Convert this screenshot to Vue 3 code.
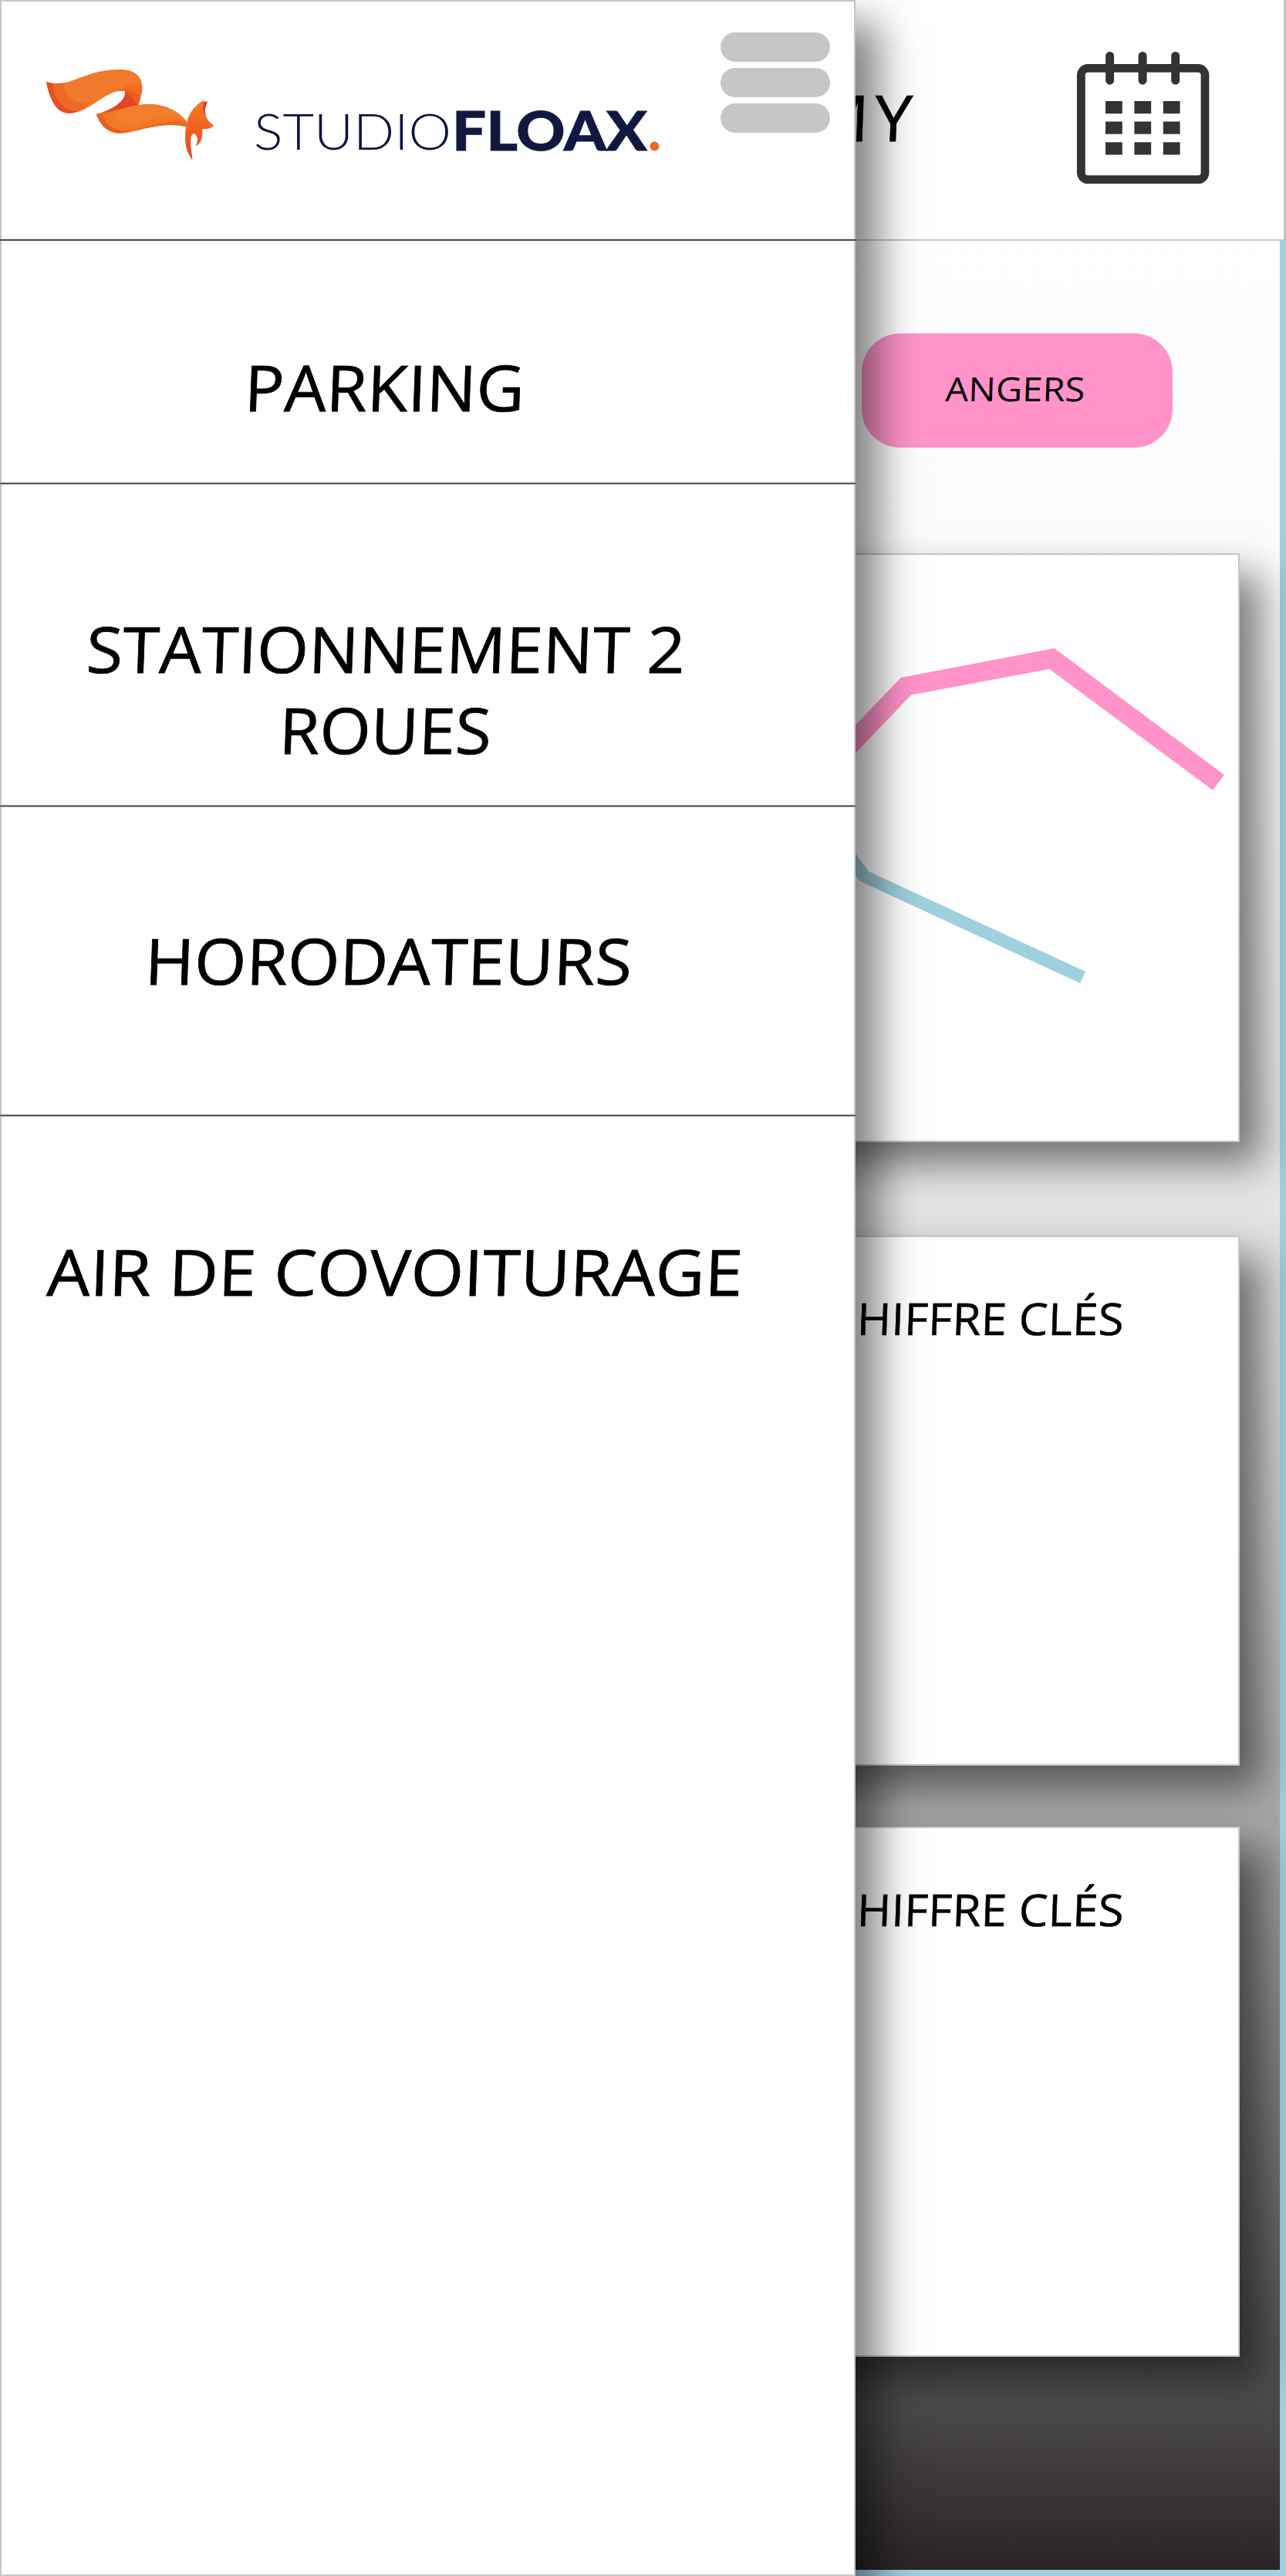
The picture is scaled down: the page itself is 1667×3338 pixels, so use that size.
<script setup>
const menu = [
  { id: 'parking', height: 316, lines: [{ text: 'PARKING', x: 316, y: 221, w: 363 }] },
  {
    id: 'deux-roues',
    height: 418,
    lines: [
      { text: 'STATIONNEMENT 2', x: 111, y: 244, w: 776 },
      { text: 'ROUES', x: 361, y: 349, w: 275 }
    ]
  },
  { id: 'horodateurs', height: 401, lines: [{ text: 'HORODATEURS', x: 187, y: 230, w: 631 }] },
  { id: 'covoiturage', height: 401, lines: [{ text: 'AIR DE COVOITURAGE', x: 60, y: 232, w: 902 }] }
]
const cards = ['c1', 'c2']
const cols = [1433, 1470.4, 1507.8].map((x) => x - 1396)
const rows = [131, 157.5, 184.3].map((y) => y - 67)
const rings = [42.6, 85.1, 127.7]
</script>

<template>
  <div class="page">
    <div class="screen">
      <header class="topbar">
        <svg class="title" width="160" height="100">
          <text transform="translate(11 83) skewX(-2)" font-size="82.6">M</text>
          <text transform="translate(93 83) skewX(-2)" font-size="82.6" textLength="48.5" lengthAdjust="spacingAndGlyphs">Y</text>
        </svg>
        <svg class="calendar" width="172" height="172" fill="#333331">
          <rect x="5.4" y="21.4" width="160.6" height="144.3" rx="9" fill="none" stroke="#333331" stroke-width="10.8" />
          <rect v-for="r in rings" :key="r" :x="r - 5.5" y="0" width="11" height="42.7" rx="5.5" />
          <template v-for="y in rows" :key="y">
            <rect v-for="x in cols" :key="x" :x="x" :y="y" width="21.8" height="16.2" />
          </template>
        </svg>
      </header>
      <main class="content">
        <div class="chip">
          <svg width="402" height="148">
            <text transform="translate(108 87.7) skewX(-2)" font-size="43" textLength="181" lengthAdjust="spacingAndGlyphs">ANGERS</text>
          </svg>
        </div>
        <section class="card chart">
          <svg width="607" height="759" viewBox="998 719 607 759">
            <path fill="#ff93ca" d="M1068 982L1168 878L1366.8 840.1L1586.9 1004L1572 1023.8L1360.4 867L1181 900.4L1068 1019Z" />
            <path fill="#9fd0dd" d="M1068 1049.3L1109 1106L1125.7 1129.1L1407.2 1259.1L1400 1274L1113.7 1141.2L1109 1134.6L1068 1077Z" />
          </svg>
        </section>
        <section v-for="c in cards" :key="c" class="card figures">
          <svg width="607" height="160">
            <text transform="translate(69 126.5) skewX(-2)" font-size="57.4" textLength="389" lengthAdjust="spacingAndGlyphs">C<tspan dx="5">HIFFRE CLÉS</tspan></text>
          </svg>
        </section>
      </main>
    </div>

    <aside class="drawer">
      <div class="brand">
        <svg class="fox" width="260" height="150" viewBox="0 0 780 450">
          <defs>
            <linearGradient id="foxBody" x1="0" y1="0" x2="0" y2="1">
              <stop offset="0" stop-color="#f47c28" />
              <stop offset=".45" stop-color="#f3641f" />
              <stop offset="1" stop-color="#e4422a" />
            </linearGradient>
            <linearGradient id="foldBack" x1="0" y1="1" x2="1" y2="0">
              <stop offset="0" stop-color="#ee5c22" />
              <stop offset=".4" stop-color="#e34326" />
            </linearGradient>
          </defs>
          <path fill="url(#foldBack)" d="M366 146C368 188 312 216 256 234L340 226L418 202L408 156Z" />
          <path fill="#f1792c" d="M60 108Q100 121 150 107C215 85 255 62 345 60C410 60 433 92 433 130C433 160 422 178 418 201C408 182 388 164 370 146Q355 139 330 146C265 168 215 230 150 230C100 230 75 180 60 108Z" />
          <path fill="#f36c22" d="M433 125C433 160 422 178 418 201C408 182 388 164 370 146Q355 139 330 146C375 120 400 108 433 125Z" />
          <path fill="#ef5b20" d="M370 146Q355 139 330 146C370 130 400 140 426 172L418 201C408 182 388 164 370 146Z" />
          <path fill="#ee6b27" d="M60 108Q95 120 127 113C133 165 170 195 232 192C205 214 180 230 150 230C100 230 75 180 60 108Z" />
          <path fill="#e94e24" d="M60 108L86 116C90 180 125 222 185 221Q168 230 150 230C100 230 75 180 60 108Z" />
          <path fill="#f27824" d="M254 233C330 225 395 195 460 194C535 196 580 228 608 264L606 283C560 272 510 275 450 288C410 298 380 308 345 308C295 305 270 275 254 233Z" />
          <path fill="#f37f2c" d="M322 224C380 206 420 196 460 196C525 198 570 222 598 256C540 225 490 250 430 268C370 282 330 262 322 224Z" />
          <path fill="#ef5c20" d="M254 233L278 230C290 280 330 305 395 297C370 305 355 308 345 308C295 305 270 275 254 233Z" />
          <path fill="#f2641f" d="M395 297C460 276 540 256 602 266L606 283C560 272 510 275 450 288Z" />
          <path fill="url(#foxBody)" d="M673 180C640 195 615 230 608 262C598 300 598 340 605 365C612 390 622 400 628 413C629 395 620 370 622 335C622 315 630 308 638 311C650 320 651 340 640 358C657 352 669 335 667 292C687 292 705 288 712 277C700 272 685 258 679 235C674 214 682 195 688 184Q678 190 673 180Z" />
          <path fill="#df3a2b" d="M688 184L672 190C667 210 669 226 680 238C674 214 682 198 688 184Z" />
        </svg>
        <svg class="wordmark" width="560" height="80">
          <text class="thin" x="29" y="66" font-size="65.5" textLength="256" lengthAdjust="spacingAndGlyphs">STUDIO</text>
          <text class="black" x="286" y="66.5" font-size="71" textLength="253" lengthAdjust="spacingAndGlyphs">FLOAX</text>
          <circle cx="548.4" cy="61.5" r="6" fill="#f26722" />
        </svg>
        <div class="burger"><i></i><i></i><i></i></div>
      </div>
      <nav>
        <a v-for="item in menu" :key="item.id" class="item" :style="{ height: item.height + 'px' }">
          <svg width="1109" :height="item.height - 3">
            <text
              v-for="l in item.lines"
              :key="l.text"
              :transform="`translate(${l.x} ${l.y}) skewX(-2)`"
              font-size="82.6"
              :textLength="l.w"
              lengthAdjust="spacingAndGlyphs"
            >{{ l.text }}</text>
          </svg>
        </a>
      </nav>
    </aside>
  </div>
</template>

<style>
body { margin: 0; }
</style>

<style scoped>
.page {
  position: relative;
  width: 1667px;
  height: 3338px;
  overflow: hidden;
  background: #9fd0dd;
  font-family: "Open Sans", "Noto Sans", sans-serif;
}
svg { display: block; flex: none; }
.screen {
  width: 1659px;
  height: 3329.5px;
  background: linear-gradient(#fff 0, #fefefe 400px, #fcfcfc 700px, #f3f3f3 1100px, #e5e5e5 1550px, #cccccc 1960px, #a9a8a8 2350px, #7b7878 2730px, #4c4949 3120px, #292425 3329px);
}
.topbar {
  box-sizing: border-box;
  display: flex;
  width: 1666px;
  height: 312px;
  padding-left: 1040px;
  background: #fff;
  border-right: 2px solid #c6c6c6;
  border-bottom: 2px solid #c6c6c6;
}
.title { margin-top: 100px; }
.title text, .item text { stroke: #000; stroke-width: .8px; }
.figures text { stroke: #000; stroke-width: .5px; }
.calendar { margin: 67px 0 0 196px; }
.content {
  display: flex;
  flex-direction: column;
  align-items: flex-end;
  padding: 120px 52px 0 0;
}
.chip {
  width: 402.5px;
  height: 148px;
  margin-right: 87.5px;
  border-radius: 50px;
  background: #ff93ca;
}
.card {
  box-sizing: border-box;
  display: flex;
  justify-content: flex-end;
  width: 1547px;
  background: #fff;
  border: 2px solid #c6c6c6;
  box-shadow: 28px 28px 48px rgba(0, 0, 0, .5);
}
.chart { height: 763px; margin: 137px 0 42px; }
.figures { height: 687px; margin-top: 79px; }
.drawer {
  position: absolute;
  inset: 0 auto 0 0;
  box-sizing: border-box;
  width: 1109px;
  background: #fff;
  border: 2px solid #c6c6c6;
  box-shadow: 30px 30px 50px rgba(0, 0, 0, .5);
}
.brand {
  box-sizing: border-box;
  display: flex;
  height: 310px;
  margin: 0 -2px;
  padding-left: 40px;
  border-bottom: 2px solid #484848;
}
.fox { margin-top: 68px; }
.wordmark { margin: 126px 0 0; font-family: Lato, sans-serif; }
.thin { font-weight: 300; fill: #0b1440; }
.black { font-weight: 900; fill: #101840; stroke: #101840; stroke-width: .8px; }
.burger {
  display: flex;
  flex-direction: column;
  gap: 8px;
  width: 142px;
  margin: 40px 0 0 74px;
}
.burger i { height: 38px; border-radius: 19px; background: #c6c6c6; }
.item {
  display: block;
  margin: 0 -2px;
  background: linear-gradient(#989898 1px, #4c4c4c 1px, #4c4c4c 2px, #989898 2px) bottom / 100% 3px no-repeat;
}
.item:last-child { background: none; }
</style>
